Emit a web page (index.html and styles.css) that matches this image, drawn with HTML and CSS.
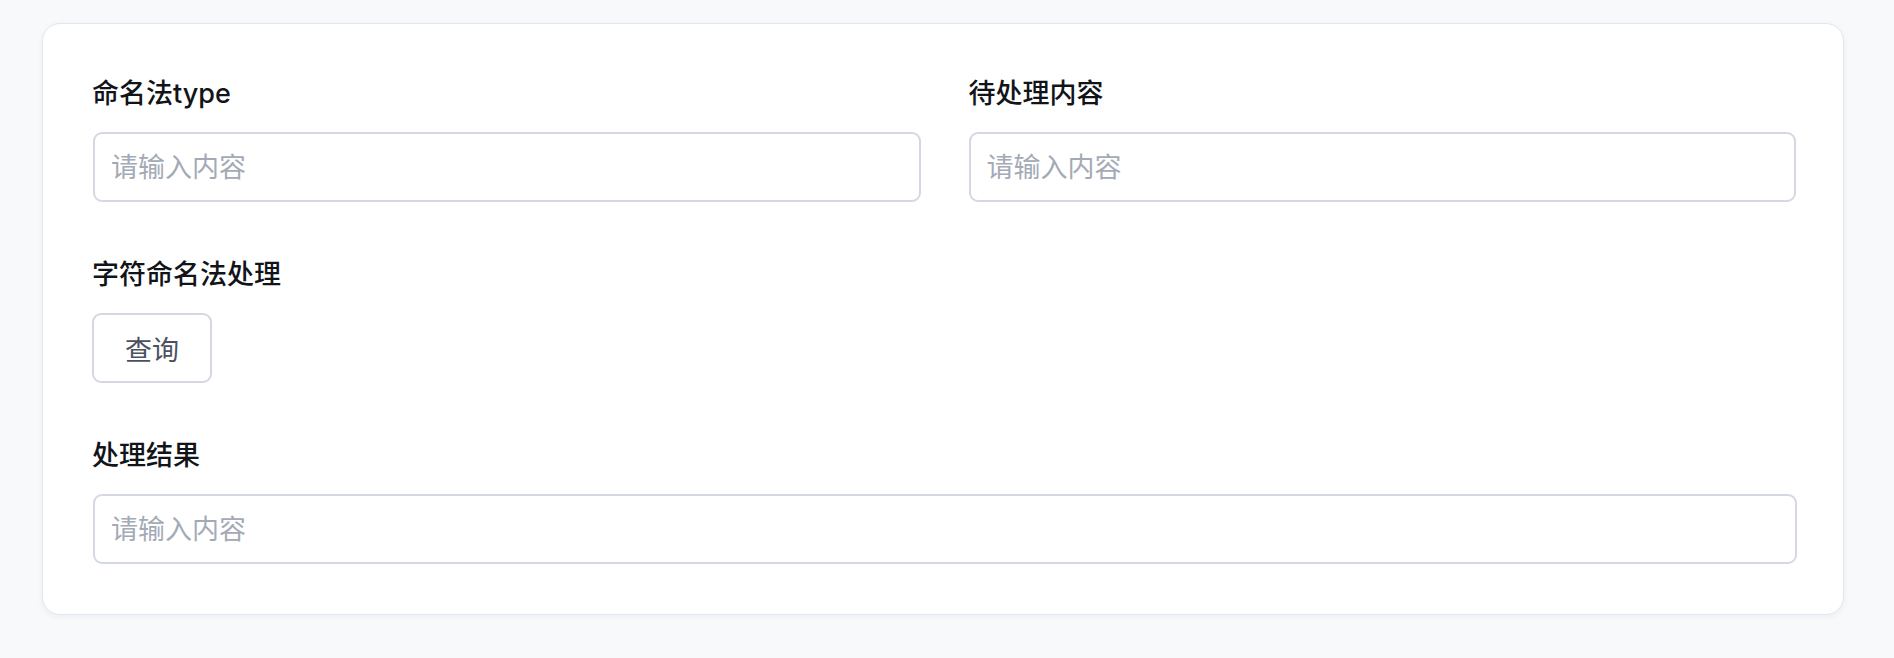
FILE: index.html
```html
<!DOCTYPE html>
<html lang="zh-CN">
<head>
<meta charset="utf-8">
<title>字符命名法处理</title>
<link rel="stylesheet" href="styles.css">
</head>
<body>
<div class="page">
  <div class="card">
    <div class="row-2">
      <div class="field">
        <label class="label">命名法type</label>
        <input class="input" type="text" placeholder="请输入内容">
      </div>
      <div class="field">
        <label class="label">待处理内容</label>
        <input class="input" type="text" placeholder="请输入内容">
      </div>
    </div>
    <div class="field">
      <label class="label">字符命名法处理</label>
      <div><button class="btn" type="button">查询</button></div>
    </div>
    <div class="field">
      <label class="label">处理结果</label>
      <input class="input" type="text" placeholder="请输入内容">
    </div>
  </div>
</div>
</body>
</html>
```
FILE: styles.css
```css
html, body {
  margin: 0;
  padding: 0;
  background: #f8f9fb;
}
body {
  font-family: Inter, "Noto Sans CJK SC", "Noto Sans", sans-serif;
  color: #111418;
}
.page {
  padding: 23px 50px 43px 42px;
}
.card {
  box-sizing: border-box;
  background: #ffffff;
  border: 1px solid #e3e6ec;
  border-radius: 18px;
  box-shadow: 0 2px 6px rgba(30, 40, 70, 0.05);
  padding: 50px 47px 50px 49px;
  display: flex;
  flex-direction: column;
  gap: 53px;
}
.row-2 {
  display: grid;
  grid-template-columns: 1fr 1fr;
  column-gap: 49px;
}
.field {
  display: flex;
  flex-direction: column;
}
.label {
  font-size: 27px;
  line-height: 40px;
  font-weight: 500;
  color: #111418;
  margin-bottom: 18px;
}
.input {
  box-sizing: border-box;
  height: 70px;
  width: 100%;
  margin: 0 0 0 1px;
  border: 2px solid #d3d8e2;
  border-radius: 9px;
  padding: 0 16px;
  font-family: Inter, "Noto Sans CJK SC", sans-serif;
  font-size: 27px;
  color: #111418;
  background: #ffffff;
  outline: none;
}
.row-2 .field + .field .input {
  margin-left: 0;
}
.input::placeholder {
  color: #a3aab6;
}
.btn {
  box-sizing: border-box;
  width: 120px;
  height: 70px;
  border: 2px solid #d3d8e2;
  border-radius: 9px;
  background: #ffffff;
  font-family: Inter, "Noto Sans CJK SC", sans-serif;
  font-size: 27px;
  color: #4b5160;
  padding: 0;
  cursor: pointer;
}
```
